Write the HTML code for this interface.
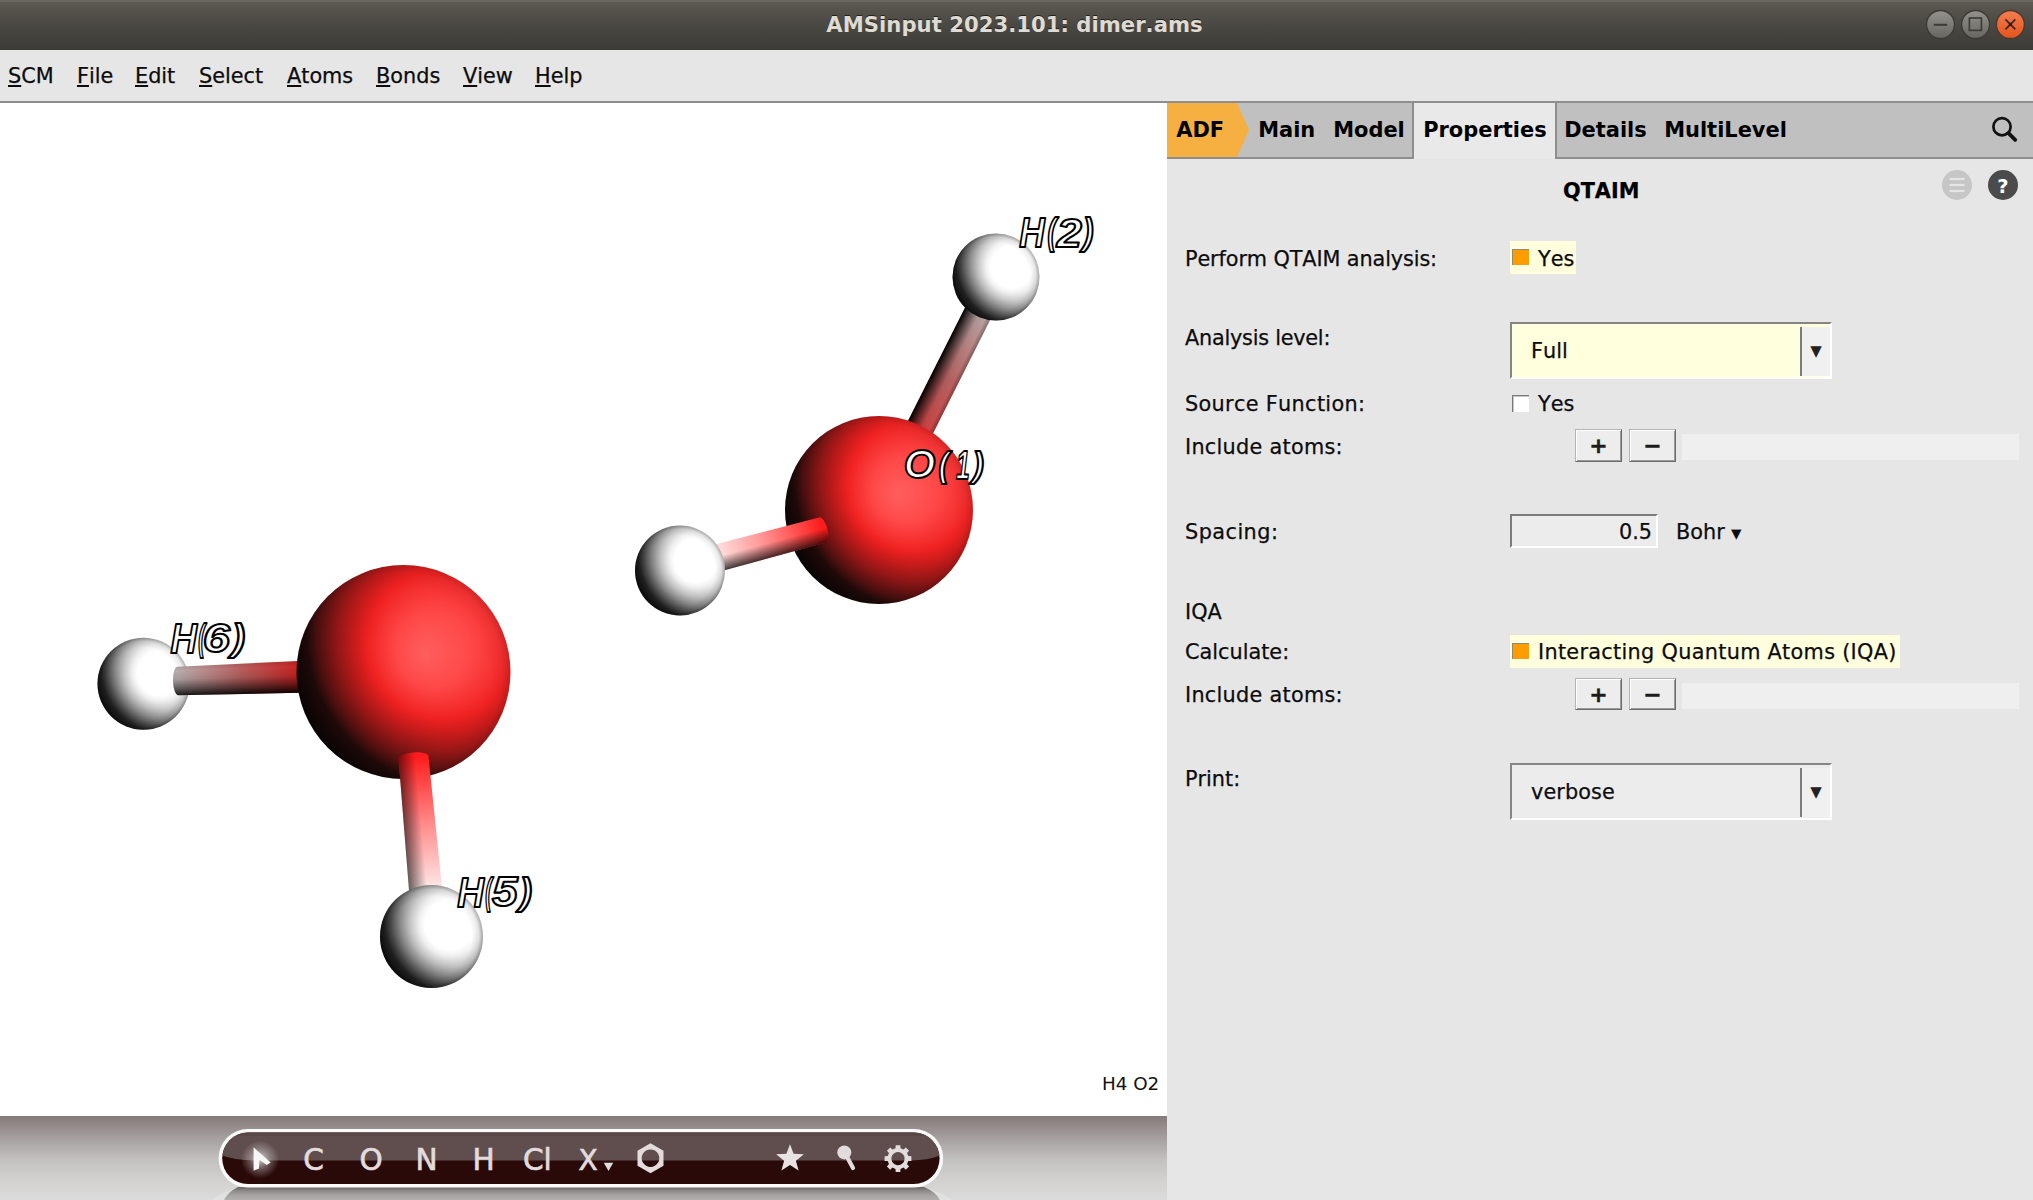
<!DOCTYPE html>
<html>
<head>
<meta charset="utf-8">
<title>AMSinput 2023.101: dimer.ams</title>
<style>
html,body{margin:0;padding:0;}
body{width:2033px;height:1200px;position:relative;overflow:hidden;background:#e6e6e6;font-family:"DejaVu Sans","Liberation Sans",sans-serif;font-size:20.8px;color:#111;font-kerning:none;}
.abs{position:absolute;}
#titlebar{left:0;top:0;width:2033px;height:50px;background:linear-gradient(#6a675f 0,#6a675f 1.5px,#5b5850 2.5px,#4a4843 50%,#3e3d39 92%,#3a3935 100%);}
#title{left:0;top:0;width:2029px;height:50px;line-height:49.6px;text-align:center;color:#dfdbd2;font-weight:bold;font-size:21.2px;text-shadow:0 -1px 0 rgba(0,0,0,.6);}
#menubar{left:0;top:50px;width:2033px;height:51px;background:#e6e6e6;}
#menuline{left:0;top:101px;width:2033px;height:2px;background:#8e8e8e;}
.mi{position:absolute;top:50px;height:51px;line-height:52.6px;font-size:20.8px;color:#0c0c0c;white-space:pre;-webkit-text-stroke:0.25px #0c0c0c;}
.mi u{text-decoration:underline;text-underline-offset:2px;text-decoration-thickness:2px;}
#viewer{left:0;top:103px;width:1167px;height:1013px;background:#fff;}
#bottombar{left:0;top:1116px;width:1167px;height:84px;background:linear-gradient(#847a7a 0%,#9a9292 17%,#b0abab 35%,#c4c2c1 53%,#d2d1d0 76%,#dcdbdb 100%);}
#panel{left:1167px;top:103px;width:866px;height:1097px;background:#e6e6e6;}
#tabbar{left:1167px;top:103px;width:866px;height:54px;background:#c0c0c0;}
#tabline{left:1167px;top:157px;width:866px;height:2px;background:#8e8e8e;}
.tab{position:absolute;top:103px;height:54px;line-height:55.5px;font-weight:bold;font-size:20.95px;color:#000;white-space:pre;margin-left:-0.8px;}
.lbl{position:absolute;white-space:pre;font-size:20.8px;line-height:26px;height:26px;color:#0c0c0c;-webkit-text-stroke:0.25px #0c0c0c;}
</style>
</head>
<body>
<div id="titlebar" class="abs"></div>
<div id="title" class="abs">AMSinput 2023.101: dimer.ams</div>
<div id="menubar" class="abs"></div>
<div id="menuline" class="abs"></div>
<div class="mi" style="left:8px"><u>S</u>CM</div>
<div class="mi" style="left:77px"><u>F</u>ile</div>
<div class="mi" style="left:135px"><u>E</u>dit</div>
<div class="mi" style="left:199px"><u>S</u>elect</div>
<div class="mi" style="left:287px"><u>A</u>toms</div>
<div class="mi" style="left:376px"><u>B</u>onds</div>
<div class="mi" style="left:463px"><u>V</u>iew</div>
<div class="mi" style="left:535px"><u>H</u>elp</div>
<div id="viewer" class="abs"></div>
<div id="bottombar" class="abs"></div>
<div id="panel" class="abs"></div>
<div id="tabbar" class="abs"></div>
<div id="tabline" class="abs"></div>
<div class="abs" style="left:1167px;top:103px;width:82px;height:54px;">
<svg width="82" height="54" viewBox="0 0 82 54" style="display:block"><polygon points="0,0 70,0 82,27 70,54 0,54" fill="#f5b041"/></svg></div>
<div class="abs" id="acttab" style="left:1412px;top:103px;width:141px;height:56px;background:#e9e9e9;border-left:2px solid #8e8e8e;border-right:2px solid #8e8e8e;"></div>
<div class="tab" style="left:1177px">ADF</div>
<div class="tab" style="left:1259px">Main</div>
<div class="tab" style="left:1334px">Model</div>
<div class="tab" style="left:1424px">Properties</div>
<div class="tab" style="left:1565px">Details</div>
<div class="tab" style="left:1665px">MultiLevel</div>
<svg class="abs" style="left:1988px;top:114px" width="32" height="32" viewBox="0 0 32 32"><circle cx="14" cy="12.7" r="8.6" fill="none" stroke="#111" stroke-width="2.7"/><line x1="20.5" y1="19.2" x2="27.2" y2="25.8" stroke="#111" stroke-width="3.8" stroke-linecap="round"/></svg>
<div class="lbl" style="left:1563px;top:177.5px;font-weight:bold;color:#000">QTAIM</div>
<svg class="abs" style="left:1941px;top:169px" width="32" height="32" viewBox="0 0 32 32"><circle cx="16" cy="16" r="15" fill="#c6c6c6"/><g stroke="#e4e4e4" stroke-width="2.2"><line x1="8.5" y1="10" x2="23.5" y2="10"/><line x1="8.5" y1="16" x2="23.5" y2="16"/><line x1="8.5" y1="22" x2="23.5" y2="22"/></g></svg>
<svg class="abs" style="left:1987px;top:169px" width="32" height="32" viewBox="0 0 32 32"><circle cx="16" cy="16" r="15" fill="#4b4b4b"/><text x="16" y="23.5" text-anchor="middle" font-family="DejaVu Sans, Liberation Sans, sans-serif" font-weight="bold" font-size="19.5" fill="#fff">?</text></svg>

<style>
.ybg{position:absolute;background:#ffffdd;}
.osq{position:absolute;width:16px;height:15px;background:#ff9c00;border-top:1px solid #8c8a78;border-left:1px solid #8c8a78;box-shadow:1px 1px 0 #fffff0;}
.wsq{position:absolute;width:16px;height:16px;background:#fff;border-top:1px solid #7a7a7a;border-left:1px solid #7a7a7a;box-shadow:inset 1px 1px 0 #c4c4c4;}
.combo{position:absolute;left:1510px;width:320px;height:54px;border-top:2px solid #858585;border-left:2px solid #858585;border-right:2px solid #fff;border-bottom:2px solid #fff;box-sizing:border-box;width:322px;height:57px;}
.carrow{position:absolute;right:0;top:3px;bottom:1px;width:28px;background:#f0f0f0;border-left:2px solid #7c7c7c;font-size:15px;line-height:48px;text-align:center;color:#222;}
.btn{position:absolute;width:47px;height:32.5px;box-sizing:border-box;background:#ededed;border:1px solid;border-color:#b4b4b4 #6c6c6c #6c6c6c #b4b4b4;box-shadow:inset 1px 1px 0 #fff,inset -1px -1px 0 #9a9a9a;font-weight:bold;font-size:22px;line-height:32px;text-align:center;color:#1c1c1c;-webkit-text-stroke:0.4px #1c1c1c;}
.fld{position:absolute;left:1682px;width:337px;height:26px;background:#efefef;}
</style>
<div class="lbl" style="left:1185px;top:245.8px;letter-spacing:-0.11px">Perform QTAIM analysis:</div>
<div class="ybg" style="left:1510px;top:241px;width:66px;height:33px"></div>
<div class="osq" style="left:1512px;top:249px"></div>
<div class="lbl" style="left:1538px;top:245.8px">Yes</div>

<div class="lbl" style="left:1185px;top:325.4px;letter-spacing:-0.24px">Analysis level:</div>
<div class="combo" style="top:322px;background:#ffffdd"><div class="lbl" style="left:19px;top:13.8px">Full</div><div class="carrow">&#9660;</div></div>

<div class="lbl" style="left:1185px;top:390.8px;letter-spacing:0.33px">Source Function:</div>
<div class="wsq" style="left:1512px;top:395px"></div>
<div class="lbl" style="left:1538px;top:390.8px">Yes</div>

<div class="lbl" style="left:1185px;top:433.8px;letter-spacing:0.27px">Include atoms:</div>
<div class="btn" style="left:1575px;top:429px">+</div>
<div class="btn" style="left:1629px;top:429px">&#8722;</div>
<div class="fld" style="top:434px"></div>

<div class="lbl" style="left:1185px;top:518.5px;letter-spacing:0.45px">Spacing:</div>
<div class="abs" style="left:1510px;top:514px;width:148px;height:34px;box-sizing:border-box;background:#ececec;border-top:2px solid #7c7c7c;border-left:2px solid #7c7c7c;border-right:2px solid #fff;border-bottom:2px solid #fff;"><div class="lbl" style="right:4px;top:3px">0.5</div></div>
<div class="lbl" style="left:1676px;top:518.8px">Bohr <span style="font-size:13px;position:relative;top:-1px">&#9660;</span></div>

<div class="lbl" style="left:1185px;top:599.3px">IQA</div>
<div class="lbl" style="left:1185px;top:638.8px">Calculate:</div>
<div class="ybg" style="left:1510px;top:635px;width:390px;height:33px"></div>
<div class="osq" style="left:1512px;top:643px"></div>
<div class="lbl" style="left:1538px;top:639.4px;letter-spacing:0.3px">Interacting Quantum Atoms (IQA)</div>

<div class="lbl" style="left:1185px;top:682.3px;letter-spacing:0.27px">Include atoms:</div>
<div class="btn" style="left:1575px;top:677.5px">+</div>
<div class="btn" style="left:1629px;top:677.5px">&#8722;</div>
<div class="fld" style="top:683px"></div>

<div class="lbl" style="left:1185px;top:766.1px">Print:</div>
<div class="combo" style="top:763px;background:#ececec"><div class="lbl" style="left:19px;top:14.4px;letter-spacing:0.1px">verbose</div><div class="carrow">&#9660;</div></div>

<!--MOL_START--><svg class="abs" style="left:0;top:103px" width="1167" height="1013" viewBox="0 103 1167 1013">
<defs>
<radialGradient id="gO" cx="0.8" cy="0.3" r="0.86" fx="0.6" fy="0.42">
<stop offset="0" stop-color="#ff5e5e"/><stop offset="0.2" stop-color="#ff4848"/><stop offset="0.33" stop-color="#f63030"/><stop offset="0.4" stop-color="#f02222"/><stop offset="0.48" stop-color="#d01c1c"/><stop offset="0.625" stop-color="#901616"/><stop offset="0.765" stop-color="#4a0f0f"/><stop offset="0.84" stop-color="#1e0909"/><stop offset="1" stop-color="#0a0303"/>
</radialGradient>
<radialGradient id="gH" cx="0.8" cy="0.3" r="0.86" fx="0.63" fy="0.42">
<stop offset="0" stop-color="#ffffff"/><stop offset="0.28" stop-color="#ffffff"/><stop offset="0.36" stop-color="#f0f0f0"/><stop offset="0.42" stop-color="#dcdcdc"/><stop offset="0.5" stop-color="#c0c0c0"/><stop offset="0.625" stop-color="#8a8a8a"/><stop offset="0.765" stop-color="#484848"/><stop offset="0.86" stop-color="#202020"/><stop offset="1" stop-color="#0e0e0e"/>
</radialGradient>
<radialGradient id="limbH" cx="0.5" cy="0.5" r="0.5"><stop offset="0.78" stop-color="#000" stop-opacity="0"/><stop offset="0.92" stop-color="#000" stop-opacity="0.08"/><stop offset="1" stop-color="#000" stop-opacity="0.3"/></radialGradient>
<radialGradient id="limbO" cx="0.5" cy="0.5" r="0.5"><stop offset="0.8" stop-color="#000" stop-opacity="0"/><stop offset="0.93" stop-color="#000" stop-opacity="0.04"/><stop offset="1" stop-color="#000" stop-opacity="0.14"/></radialGradient>
</defs>
<linearGradient id="b1a" gradientUnits="userSpaceOnUse" x1="0" y1="0" x2="178.0" y2="0"><stop offset="0" stop-color="#d83030"/><stop offset="0.5" stop-color="#b86262"/><stop offset="1" stop-color="#b8b2b2"/></linearGradient>
<linearGradient id="b1s" gradientUnits="userSpaceOnUse" x1="0" y1="14.0" x2="0" y2="-14.0">
<stop offset="0" stop-color="#000" stop-opacity="0.3"/><stop offset="0.18" stop-color="#000" stop-opacity="0"/><stop offset="0.45" stop-color="#000" stop-opacity="0.06"/><stop offset="0.75" stop-color="#000" stop-opacity="0.55"/><stop offset="1" stop-color="#000" stop-opacity="1.0"/></linearGradient>
<g transform="translate(905,458) rotate(-63.29)"><path d="M0,-14.0 L178.0,-14.0 L178.0,14.0 L0,14.0 Z" fill="url(#b1a)"/><path d="M0,-14.0 L178.0,-14.0 L178.0,14.0 L0,14.0 Z" fill="url(#b1s)"/></g>
<circle cx="879" cy="510" r="94" fill="url(#gO)"/><circle cx="879" cy="510" r="94" fill="url(#limbO)"/>
<linearGradient id="b2a" gradientUnits="userSpaceOnUse" x1="0" y1="0" x2="126.8" y2="0"><stop offset="0" stop-color="#ff1c1c"/><stop offset="0.5" stop-color="#ff9a9a"/><stop offset="1" stop-color="#ffffff"/></linearGradient>
<linearGradient id="b2s" gradientUnits="userSpaceOnUse" x1="0" y1="13.8" x2="0" y2="-13.8">
<stop offset="0" stop-color="#000" stop-opacity="0.0"/><stop offset="0.18" stop-color="#000" stop-opacity="0"/><stop offset="0.45" stop-color="#000" stop-opacity="0.0"/><stop offset="0.75" stop-color="#000" stop-opacity="0.41"/><stop offset="1" stop-color="#000" stop-opacity="0.75"/></linearGradient>
<g transform="translate(822.5,530) rotate(165.10)"><path d="M0,-13.0 L126.8,-13.8 L126.8,13.8 L0,13.0 A5,13.0 0 0 1 0,-13.0 Z" fill="url(#b2a)"/><path d="M0,-13.0 L126.8,-13.8 L126.8,13.8 L0,13.0 A5,13.0 0 0 1 0,-13.0 Z" fill="url(#b2s)"/></g>
<circle cx="680" cy="570.5" r="45" fill="url(#gH)"/><circle cx="680" cy="570.5" r="45" fill="url(#limbH)"/>
<circle cx="996" cy="277" r="43.5" fill="url(#gH)"/><circle cx="996" cy="277" r="43.5" fill="url(#limbH)"/>
<circle cx="143.5" cy="683.7" r="46" fill="url(#gH)"/><circle cx="143.5" cy="683.7" r="46" fill="url(#limbH)"/>
<linearGradient id="b3a" gradientUnits="userSpaceOnUse" x1="0" y1="0" x2="132.1" y2="0"><stop offset="0" stop-color="#b8acac"/><stop offset="0.5" stop-color="#b85c5c"/><stop offset="1" stop-color="#cc1616"/></linearGradient>
<linearGradient id="b3s" gradientUnits="userSpaceOnUse" x1="0" y1="-16.0" x2="0" y2="16.0">
<stop offset="0" stop-color="#000" stop-opacity="0.1"/><stop offset="0.18" stop-color="#000" stop-opacity="0"/><stop offset="0.45" stop-color="#000" stop-opacity="0.1"/><stop offset="0.75" stop-color="#000" stop-opacity="0.52"/><stop offset="1" stop-color="#000" stop-opacity="0.95"/></linearGradient>
<g transform="translate(178,681) rotate(-1.95)"><path d="M0,-14.3 L132.1,-16.0 L132.1,16.0 L0,14.3 A5,14.3 0 0 1 0,-14.3 Z" fill="url(#b3a)"/><path d="M0,-14.3 L132.1,-16.0 L132.1,16.0 L0,14.3 A5,14.3 0 0 1 0,-14.3 Z" fill="url(#b3s)"/></g>
<circle cx="403.5" cy="672" r="107" fill="url(#gO)"/><circle cx="403.5" cy="672" r="107" fill="url(#limbO)"/>
<linearGradient id="b4a" gradientUnits="userSpaceOnUse" x1="0" y1="0" x2="148.1" y2="0"><stop offset="0" stop-color="#ff1c1c"/><stop offset="0.45" stop-color="#ff8a8a"/><stop offset="1" stop-color="#ffffff"/></linearGradient>
<linearGradient id="b4s" gradientUnits="userSpaceOnUse" x1="0" y1="-16.8" x2="0" y2="16.8">
<stop offset="0" stop-color="#000" stop-opacity="0.0"/><stop offset="0.18" stop-color="#000" stop-opacity="0"/><stop offset="0.45" stop-color="#000" stop-opacity="0.0"/><stop offset="0.75" stop-color="#000" stop-opacity="0.33"/><stop offset="1" stop-color="#000" stop-opacity="0.6"/></linearGradient>
<g transform="translate(413.5,757.5) rotate(84.77)"><path d="M0,-15.0 L148.1,-16.8 L148.1,16.8 L0,15.0 A5,15.0 0 0 1 0,-15.0 Z" fill="url(#b4a)"/><path d="M0,-15.0 L148.1,-16.8 L148.1,16.8 L0,15.0 A5,15.0 0 0 1 0,-15.0 Z" fill="url(#b4s)"/></g>
<circle cx="431.5" cy="936.5" r="51.5" fill="url(#gH)"/><circle cx="431.5" cy="936.5" r="51.5" fill="url(#limbH)"/>
<g font-family="Liberation Sans, sans-serif" font-style="italic" font-weight="bold" fill="#fff" stroke="#000" stroke-width="2.1" stroke-linejoin="round"><text transform="translate(1019.19,246.95) scale(0.819,0.971)" font-size="43">H</text><text transform="translate(1047.60,244.45) scale(0.756,1.035)" font-size="35.3">(</text><text transform="translate(1056.84,246.95) scale(1.047,0.955)" font-size="43">2</text><text transform="translate(1082.61,244.45) scale(0.938,1.035)" font-size="35.3">)</text></g>
<g font-family="Liberation Sans, sans-serif" font-style="italic" font-weight="bold" fill="#fff" stroke="#000" stroke-width="2.1" stroke-linejoin="round"><text transform="translate(903.87,478.48) scale(0.940,0.930)" font-size="43">O</text><text transform="translate(938.61,476.90) scale(0.909,1.014)" font-size="35.3">(</text><text transform="translate(955.92,478.95) scale(0.573,0.938)" font-size="43">1</text><text transform="translate(972.08,476.90) scale(1.011,1.014)" font-size="35.3">)</text></g>
<g font-family="Liberation Sans, sans-serif" font-style="italic" font-weight="bold" fill="#fff" stroke="#000" stroke-width="2.1" stroke-linejoin="round"><text transform="translate(170.41,652.95) scale(0.852,0.980)" font-size="43">H</text><text transform="translate(198.33,650.45) scale(0.575,1.035)" font-size="35.3">(</text><text transform="translate(202.79,652.48) scale(1.132,0.948)" font-size="43">6</text><text transform="translate(231.52,650.45) scale(1.156,1.035)" font-size="35.3">)</text></g>
<g font-family="Liberation Sans, sans-serif" font-style="italic" font-weight="bold" fill="#fff" stroke="#000" stroke-width="2.1" stroke-linejoin="round"><text transform="translate(457.16,906.70) scale(0.860,0.980)" font-size="43">H</text><text transform="translate(485.33,904.20) scale(0.575,1.035)" font-size="35.3">(</text><text transform="translate(492.02,906.21) scale(1.069,0.972)" font-size="43">5</text><text transform="translate(519.30,904.20) scale(1.084,1.035)" font-size="35.3">)</text></g>
</svg>
<div class="abs" style="left:1102px;top:1072.5px;font-size:18.3px;line-height:22px;color:#111">H4 O2</div>
<!--MOL_END-->
<!--TB_START--><svg class="abs" style="left:0;top:1116px" width="1167" height="84" viewBox="0 1116 1167 84">
<defs>
<linearGradient id="pillg" x1="0" y1="0" x2="0" y2="1"><stop offset="0" stop-color="#5a4848"/><stop offset="0.5" stop-color="#624f4f"/><stop offset="0.5" stop-color="#2c0a0a"/><stop offset="1" stop-color="#260707"/></linearGradient>
<radialGradient id="glow" cx="0.5" cy="0.5" r="0.5"><stop offset="0" stop-color="#fff" stop-opacity="0.75"/><stop offset="0.5" stop-color="#fff" stop-opacity="0.3"/><stop offset="1" stop-color="#fff" stop-opacity="0"/></radialGradient>
<linearGradient id="refl" x1="0" y1="0" x2="0" y2="1"><stop offset="0" stop-color="#6a6464"/><stop offset="0.3" stop-color="#8e8a8a"/><stop offset="0.6" stop-color="#a5a1a1"/><stop offset="1" stop-color="#b2afaf"/></linearGradient>
<clipPath id="pillclip"><rect x="222.2" y="1132.6" width="717.4" height="51.4" rx="25.7"/></clipPath>
</defs>
<path d="M212,1200 Q222,1192 240,1187 L922,1187 Q942,1192 952,1200 Z" fill="#f2f1f1" opacity="0.3"/>
<path d="M224,1200 Q228,1192 238,1187 L924,1187 Q936,1192 940,1200 Z" fill="url(#refl)"/>
<rect x="218.6" y="1129" width="724.6" height="58.6" rx="29.3" fill="#fbfafa"/>
<rect x="222.2" y="1132.6" width="717.4" height="51.4" rx="25.7" fill="#2a0909"/>
<g clip-path="url(#pillclip)"><path d="M215,1130 L946,1130 L946,1150 Q940,1160.5 905,1160.5 L260,1160.5 Q222,1160.5 215,1150 Z" fill="#604e4e"/>
<rect x="215" y="1130" width="735" height="6" fill="#000" opacity="0.08"/></g>
<circle cx="260" cy="1159.5" r="19" fill="url(#glow)"/>
<path d="M253.6,1147.3 L270.7,1162.4 L266.7,1165 L259.4,1159.8 L259,1168.6 L253.6,1170.7 Z" fill="#f8f6f6"/>
<g font-family="DejaVu Sans, Liberation Sans, sans-serif" font-size="29.5" fill="#e2dcdc" stroke="#e2dcdc" stroke-width="0.7" text-anchor="middle">
<text x="313.5" y="1170.3">C</text><text x="371" y="1170.3">O</text><text x="426.6" y="1170.3">N</text><text x="483.6" y="1170.3">H</text><text x="537.4" y="1170.3">Cl</text><text x="588" y="1170" font-size="28">X</text>
</g>
<path d="M603.8,1162.8 L613.2,1162.8 L608.5,1171 Z" fill="#e2dcdc"/>
<path d="M650.5,1143.2 L663.5,1150.7 L663.5,1165.7 L650.5,1173.2 L637.5,1165.7 L637.5,1150.7Z M650.5,1149.4 a8.8,8.8 0 1 0 0.01,0 Z" fill="#e2dcdc" fill-rule="evenodd"/>
<polygon points="790.0,1144.2 793.6,1153.8 803.9,1154.3 795.9,1160.7 798.6,1170.6 790.0,1165.0 781.4,1170.6 784.1,1160.7 776.1,1154.3 786.4,1153.8" fill="#e8e2e2"/>
<circle cx="844.3" cy="1152.4" r="7" fill="#e2dcdc"/>
<line x1="846" y1="1155" x2="853" y2="1168" stroke="#e2dcdc" stroke-width="4.2" stroke-linecap="round"/>
<path d="M895.7,1145.2 L900.3,1145.2 L900.5,1148.3 L903.5,1149.6 L905.8,1147.5 L909.1,1150.8 L907.0,1153.1 L908.3,1156.1 L911.4,1156.3 L911.4,1160.9 L908.3,1161.1 L907.0,1164.1 L909.1,1166.4 L905.8,1169.7 L903.5,1167.6 L900.5,1168.9 L900.3,1172.0 L895.7,1172.0 L895.5,1168.9 L892.5,1167.6 L890.2,1169.7 L886.9,1166.4 L889.0,1164.1 L887.7,1161.1 L884.6,1160.9 L884.6,1156.3 L887.7,1156.1 L889.0,1153.1 L886.9,1150.8 L890.2,1147.5 L892.5,1149.6 L895.5,1148.3Z M898,1152 a6.6,6.6 0 1 0 0.01,0 Z" fill="#e2dcdc" fill-rule="evenodd"/>
</svg>
<!--TB_END-->
<svg class="abs" style="left:1913px;top:0px" width="120" height="50" viewBox="0 0 120 50">
<defs>
<linearGradient id="gb" x1="0" y1="0" x2="0" y2="1"><stop offset="0" stop-color="#93928c"/><stop offset="1" stop-color="#66655f"/></linearGradient>
<linearGradient id="rb" x1="0" y1="0" x2="0" y2="1"><stop offset="0" stop-color="#f27d50"/><stop offset="1" stop-color="#e4541a"/></linearGradient>
</defs>
<circle cx="27.5" cy="24.5" r="14" fill="url(#gb)" stroke="#3b3a36" stroke-width="1.4"/>
<circle cx="62.6" cy="24.5" r="14" fill="url(#gb)" stroke="#3b3a36" stroke-width="1.4"/>
<circle cx="97.4" cy="24.5" r="14" fill="url(#rb)" stroke="#4a3a30" stroke-width="1.4"/>
<line x1="20.8" y1="24.8" x2="34.2" y2="24.8" stroke="#3b3a36" stroke-width="2"/>
<rect x="56.4" y="18" width="12" height="12.4" fill="none" stroke="#3b3a36" stroke-width="1.6"/>
<path d="M92.4 19.4 L102.4 29.4 M102.4 19.4 L92.4 29.4" stroke="#3a2a20" stroke-width="1.7" fill="none"/>
<circle cx="97.4" cy="24.4" r="1.6" fill="#2a1a10"/>
</svg>

</body>
</html>
